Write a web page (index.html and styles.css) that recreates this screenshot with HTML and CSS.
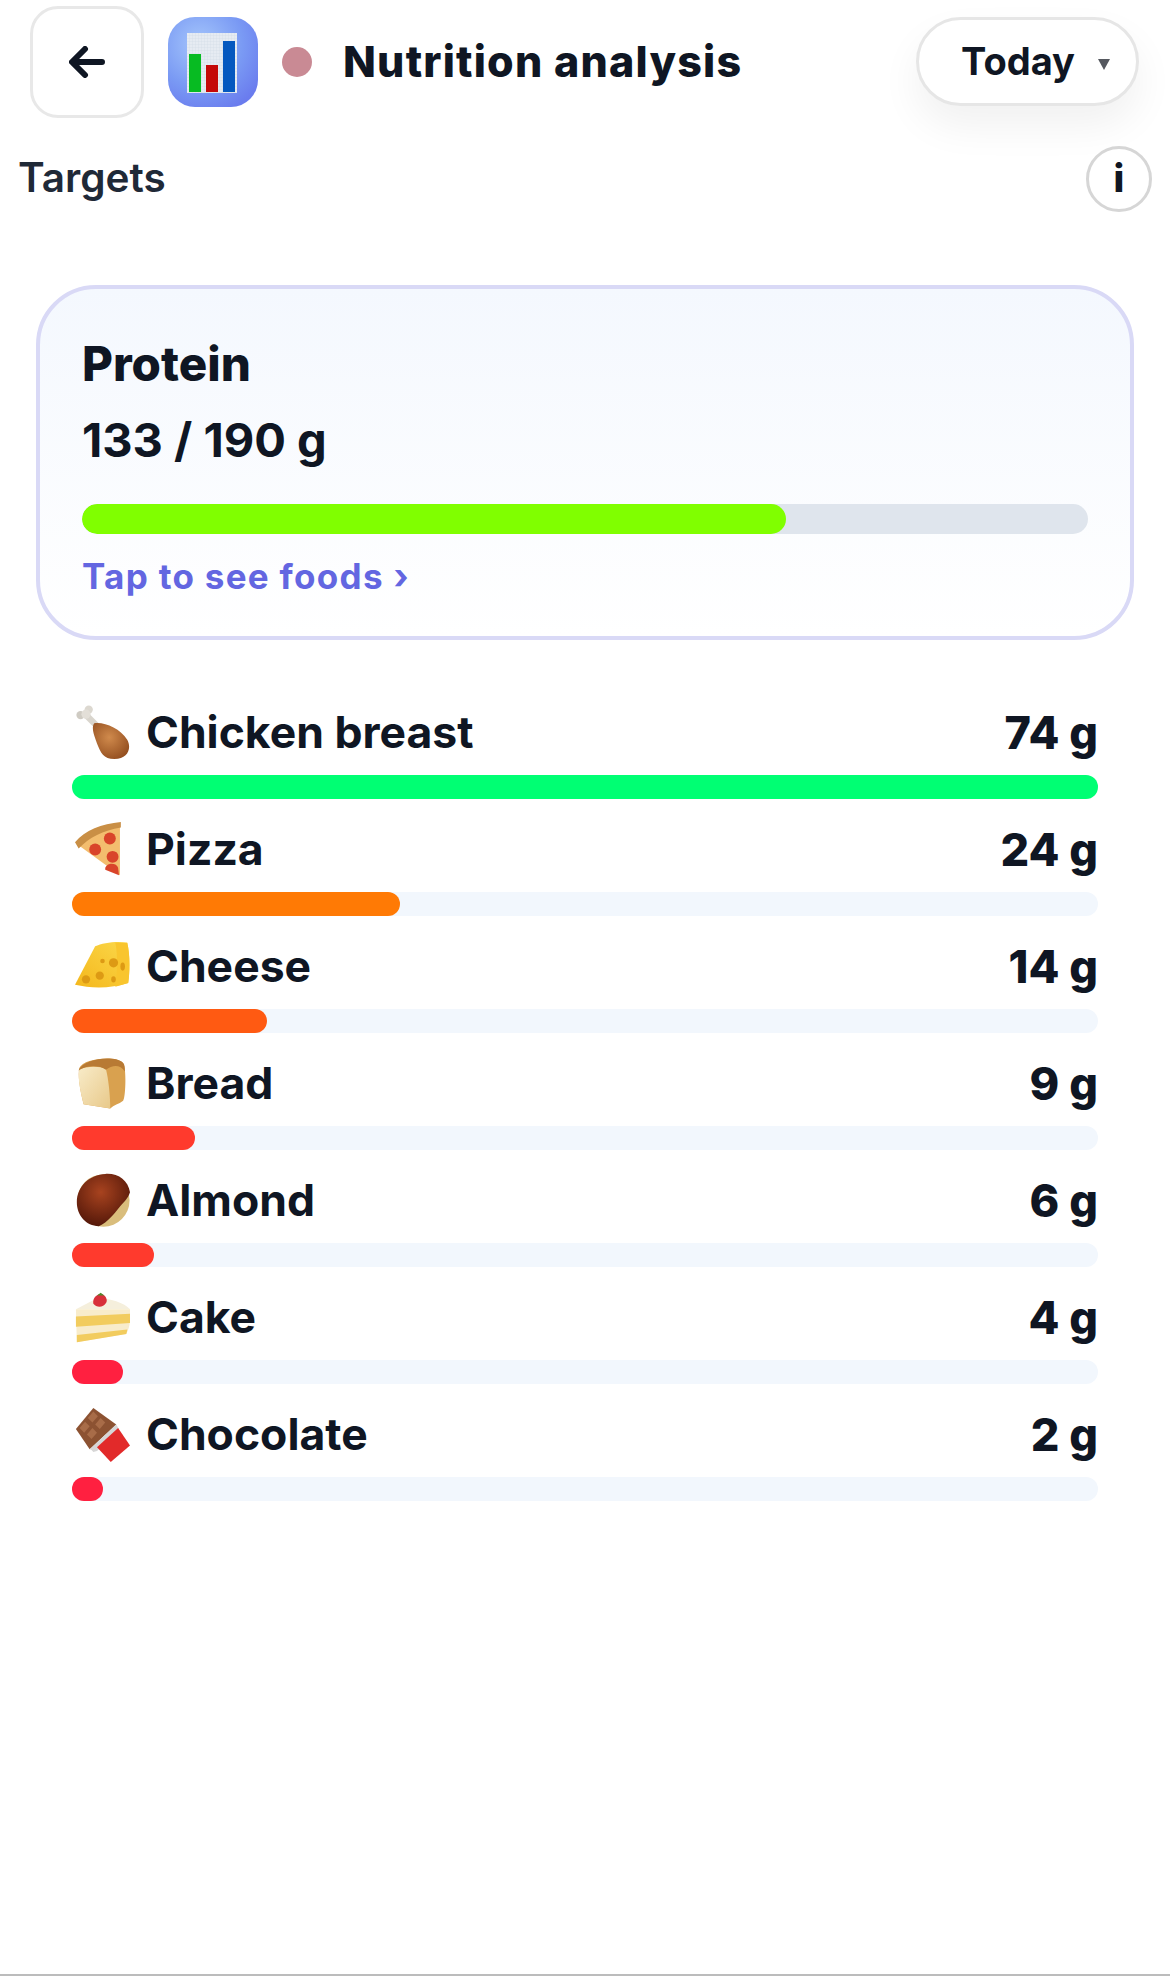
FILE: index.html
```html
<!DOCTYPE html>
<html lang="en">
<head>
    <meta charset="UTF-8">
    <meta name="viewport" content="width=device-width, initial-scale=1.0">
    <link rel="stylesheet" href="styles.css">
    <title>Nutrition analysis</title>
</head>
<body>
    <svg class="defs" width="0" height="0">
        <defs>
            <radialGradient id="app-bg" cx="0.35" cy="0.3" r="0.8">
                <stop offset="0" stop-color="#a5c6fb"/>
                <stop offset="0.6" stop-color="#7a9af4"/>
                <stop offset="1" stop-color="#6a7cee"/>
            </radialGradient>
            <pattern id="plot-grid" width="3" height="3" patternUnits="userSpaceOnUse">
                <rect width="3" height="3" fill="#e6ebf2"/>
                <path d="M0 0H3M0 0V3" stroke="#cfd8e4" stroke-width="0.6"/>
            </pattern>
            <radialGradient id="meat" cx="0.45" cy="0.4" r="0.7">
                <stop offset="0" stop-color="#d08a4c"/>
                <stop offset="1" stop-color="#8f4a1c"/>
            </radialGradient>
            <linearGradient id="cheese" x1="0" y1="1" x2="1" y2="0">
                <stop offset="0" stop-color="#f4b71c"/>
                <stop offset="1" stop-color="#fbd84a"/>
            </linearGradient>
            <linearGradient id="loaf" x1="0" y1="0" x2="1" y2="1">
                <stop offset="0" stop-color="#f8ebc8"/>
                <stop offset="1" stop-color="#e8c98a"/>
            </linearGradient>
            <radialGradient id="nut" cx="0.45" cy="0.35" r="0.7">
                <stop offset="0" stop-color="#a8431f"/>
                <stop offset="1" stop-color="#4f1508"/>
            </radialGradient>
        </defs>
    </svg>

    <div class="header">
        <button class="back-btn">
            <svg width="36" height="32" viewBox="0 0 36 32">
                <path d="M33 16H4M16 3L3 16l13 13" fill="none" stroke="#0f1623" stroke-width="6" stroke-linecap="round" stroke-linejoin="round"/>
            </svg>
        </button>
        <svg class="app-icon" width="90" height="90" viewBox="0 0 90 90">
            <rect width="90" height="90" rx="27" fill="url(#app-bg)"/>
            <rect x="19" y="16" width="50" height="60" fill="url(#plot-grid)"/>
            <rect x="21" y="37" width="12" height="38" fill="#07bb22"/>
            <rect x="38" y="48" width="12" height="27" fill="#c40808"/>
            <rect x="55" y="24" width="12" height="51" fill="#0558bf"/>
        </svg>
        <span class="status-dot"></span>
        <h1 class="title">Nutrition analysis</h1>
        <button class="range-btn">
            <span>Today</span>
            <span class="caret"></span>
        </button>
    </div>

    <div class="targets-row">
        <h2 class="targets-label">Targets</h2>
        <div class="info-btn">i</div>
    </div>

    <div class="summary-card">
        <div class="summary-name">Protein</div>
        <div class="summary-amount">133 / 190 g</div>
        <div class="summary-track">
            <div class="summary-fill" style="width: 70%"></div>
        </div>
        <div class="summary-link">Tap to see foods ›</div>
    </div>

    <div class="food-list">
        <div class="food-row">
            <div class="food-head">
                <svg class="food-icon" viewBox="0 0 60 60">
                    <path d="M12 11l12 12" stroke="#d9d5cd" stroke-width="7"/>
                    <circle cx="15" cy="5" r="4.5" fill="#dcd8d0"/>
                    <circle cx="6" cy="11" r="4.5" fill="#cfcbc3"/>
                    <circle cx="12" cy="10" r="5" fill="#e3dfd8"/>
                    <path d="M21 20c10-2 28 5 36 18 5 9 1 21-14 21-12 0-15-7-19-17-2-6-7-17-3-22z" fill="url(#meat)"/>
                </svg>
                <span class="food-name">Chicken breast</span>
                <span class="food-amount">74 g</span>
            </div>
            <div class="food-track"><div class="food-fill fill-green" style="width: 100%"></div></div>
        </div>
        <div class="food-row">
            <div class="food-head">
                <svg class="food-icon" viewBox="0 0 60 60">
                    <path d="M2 24C12 12 28 5 49 2l0 56z" fill="#f3bd6e"/>
                    <path d="M0 22C11 9 29 2 50 0l0 6C31 9 15 17 4 29z" fill="#c98f45"/>
                    <circle cx="38" cy="18" r="6.5" fill="#d9442a"/>
                    <circle cx="22" cy="30" r="6.5" fill="#d9442a"/>
                    <circle cx="41" cy="38" r="6.5" fill="#d9442a"/>
                    <path d="M33 52a6.5 5 0 0 1 14-2l1 8z" fill="#d9442a"/>
                </svg>
                <span class="food-name">Pizza</span>
                <span class="food-amount">24 g</span>
            </div>
            <div class="food-track"><div class="food-fill fill-orange" style="width: 32%"></div></div>
        </div>
        <div class="food-row">
            <div class="food-head">
                <svg class="food-icon" viewBox="0 0 60 60">
                    <path d="M0 50L22 8c8-4 24-6 35-4 3 12 3 32 1 44-18 6-40 6-58 2z" fill="url(#cheese)"/>
                    <path d="M44 4l13 0c3 12 3 32 1 44l-14 4c2-15 3-33 0-48z" fill="#f9c52e"/>
                    <circle cx="12" cy="44" r="4.5" fill="#dd9a14"/>
                    <circle cx="27" cy="40" r="4.5" fill="#dd9a14"/>
                    <circle cx="30" cy="24" r="2.5" fill="#dd9a14"/>
                    <circle cx="42" cy="26" r="5" fill="#dd9a14"/>
                    <ellipse cx="52" cy="30" rx="2.5" ry="4.5" fill="#dd9a14"/>
                    <ellipse cx="42" cy="44" rx="2.5" ry="3.5" fill="#dd9a14"/>
                </svg>
                <span class="food-name">Cheese</span>
                <span class="food-amount">14 g</span>
            </div>
            <div class="food-track"><div class="food-fill fill-deep-orange" style="width: 19%"></div></div>
        </div>
        <div class="food-row">
            <div class="food-head">
                <svg class="food-icon" viewBox="-2 -2 64 64">
                    <path d="M3 12C8 0 46-3 54 6c4 5 3 40 0 44-5 4-11 5-15 9L8 54C4 38 1 22 3 12z" fill="#d9a14f"/>
                    <path d="M3 14c6-4 24-5 31-1 3 12 5 32 5 46L8 54C4 38 1 24 3 14z" fill="url(#loaf)"/>
                    <path d="M2 15C8 0 46-3 54 6c2 2 2 6 2 10C50 7 41 9 34 14 26 8 10 9 2 15z" fill="#b87a34"/>
                </svg>
                <span class="food-name">Bread</span>
                <span class="food-amount">9 g</span>
            </div>
            <div class="food-track"><div class="food-fill fill-red" style="width: 12%"></div></div>
        </div>
        <div class="food-row">
            <div class="food-head">
                <svg class="food-icon" viewBox="0 0 60 60">
                    <circle cx="31" cy="30" r="28.5" fill="#d9bd7c"/>
                    <path d="M2 32C2 14 16 2 33 1c14-1 25 7 27 20-2 7-8 12-12 17-5 6-12 16-22 20C12 58 2 46 2 32z" fill="url(#nut)"/>
                </svg>
                <span class="food-name">Almond</span>
                <span class="food-amount">6 g</span>
            </div>
            <div class="food-track"><div class="food-fill fill-red" style="width: 8%"></div></div>
        </div>
        <div class="food-row">
            <div class="food-head">
                <svg class="food-icon" viewBox="0 -3 60 60">
                    <path d="M1 18L24 6c14 0 30 5 36 12z" fill="#f5efdc"/>
                    <path d="M1 18h59c1 9 0 20-4 27L2 54z" fill="#f8eccb"/>
                    <path d="M1 26l59-3c1 3 1 7 0 10L1 37z" fill="#f2cc5e"/>
                    <path d="M2 46l55-6c0 2-1 4-1 5L2 54z" fill="#f2cc5e"/>
                    <path d="M20 12c-1-6 3-10 8-11 5 1 8 6 6 10-3 5-10 6-14 1z" fill="#d8303a"/>
                    <path d="M24 3l4-3 4 3z" fill="#4f8a2c"/>
                </svg>
                <span class="food-name">Cake</span>
                <span class="food-amount">4 g</span>
            </div>
            <div class="food-track"><div class="food-fill fill-crimson" style="width: 5%"></div></div>
        </div>
        <div class="food-row">
            <div class="food-head">
                <svg class="food-icon" viewBox="0 0 60 60">
                    <path d="M20 1L1 24l15 22 29-27z" fill="#8c5232"/>
                    <path d="M20 5l-6 7 5 5 6-7zM11 16l-6 7 5 5 6-7zM28 12l-6 7 5 5 6-7zM19 23l-6 7 5 5 6-7z" fill="#a86c48"/>
                    <path d="M16 46l29-27 3 5-4 2 1 3-21 19-4 1-2-2z" fill="#d6d6d6"/>
                    <path d="M24 44l23-21 13 19-21 18z" fill="#e22a2a"/>
                </svg>
                <span class="food-name">Chocolate</span>
                <span class="food-amount">2 g</span>
            </div>
            <div class="food-track"><div class="food-fill fill-crimson" style="width: 3%"></div></div>
        </div>
    </div>

    <div class="bottom-line"></div>
</body>
</html>
```

FILE: styles.css
```css
* {
    box-sizing: border-box;
}

body {
    font-family: Inter, "Liberation Sans", sans-serif;
    margin: 0;
    height: 1976px;
    background-color: #fff;
    color: #0f1623;
    display: flex;
    flex-direction: column;
    overflow: hidden;
}

.defs {
    display: block;
    height: 0;
}

.header {
    display: flex;
    align-items: center;
    padding: 6px 31px 0 30px;
}

.back-btn {
    width: 114px;
    height: 112px;
    display: flex;
    align-items: center;
    justify-content: center;
    background: #fff;
    border: 3px solid #e8e8e8;
    border-radius: 28px;
    padding: 0;
}

.app-icon {
    margin-left: 24px;
    flex-shrink: 0;
}

.status-dot {
    width: 30px;
    height: 30px;
    margin-left: 24px;
    border-radius: 50%;
    background-color: #c98a94;
}

.title {
    margin: 0 0 2px 31px;
    font-size: 43px;
    font-weight: 800;
    letter-spacing: 1.2px;
    line-height: 1;
}

.range-btn {
    margin-left: auto;
    width: 223px;
    height: 89px;
    margin-top: -1px;
    display: flex;
    align-items: center;
    padding: 0 0 2px 42px;
    background: #fff;
    border: 3px solid #e6e6e6;
    border-radius: 45px;
    box-shadow: 0 20px 40px rgba(0, 0, 0, 0.06);
    font-family: inherit;
    font-size: 38px;
    font-weight: 700;
    color: #0f1623;
}

.caret {
    width: 0;
    height: 0;
    margin: 8px 0 0 23px;
    border-left: 6px solid transparent;
    border-right: 6px solid transparent;
    border-top: 11px solid #55585f;
}

.targets-row {
    display: flex;
    justify-content: space-between;
    align-items: center;
    padding: 0 18px;
    margin-top: 28px;
}

.targets-label {
    margin: -4px 0 0;
    font-size: 40.5px;
    font-weight: 600;
    color: #1f2937;
}

.info-btn {
    width: 66px;
    height: 66px;
    display: flex;
    align-items: center;
    justify-content: center;
    padding-bottom: 3px;
    border: 3px solid #d6d6d6;
    border-radius: 50%;
    background: #fff;
    font-size: 38px;
    font-weight: 800;
}

.summary-card {
    margin: 73px 36px 0;
    height: 355px;
    padding: 48px 42px 0 42px;
    border: 4px solid #d9d9f6;
    border-radius: 60px;
    background: linear-gradient(180deg, #f4f8fe, #fff);
}

.summary-name {
    font-size: 47.5px;
    font-weight: 800;
    line-height: 54px;
}

.summary-amount {
    margin-top: 22px;
    font-size: 47px;
    font-weight: 700;
    line-height: 54px;
}

.summary-track {
    margin-top: 37px;
    height: 30px;
    border-radius: 15px;
    background-color: #dfe5ed;
    overflow: hidden;
}

.summary-fill {
    height: 100%;
    border-radius: 15px;
    background-color: #80ff00;
}

.summary-link {
    margin-top: 22px;
    font-size: 35px;
    font-weight: 700;
    letter-spacing: 1.3px;
    line-height: 40px;
    color: #6366e1;
}

.food-list {
    margin-top: 61px;
    padding: 0 72px;
}

.food-row {
    height: 117px;
}

.food-head {
    height: 74px;
    padding-bottom: 12px;
    display: flex;
    align-items: center;
}

.food-icon {
    width: 55px;
    height: 55px;
    margin-left: 3px;
    flex-shrink: 0;
    filter: blur(0.4px);
}

.food-name {
    margin-left: 16px;
    font-size: 44.5px;
    font-weight: 700;
}

.food-amount {
    margin-left: auto;
    font-size: 45px;
    font-weight: 800;
}

.food-track {
    height: 24px;
    border-radius: 12px;
    background-color: #f2f7fd;
}

.food-fill {
    height: 100%;
    min-width: 30px;
    border-radius: 12px;
}

.fill-green { background-color: #00ff73; }
.fill-orange { background-color: #ff7a05; }
.fill-deep-orange { background-color: #ff5a12; }
.fill-red { background-color: #ff3a2d; }
.fill-crimson { background-color: #ff2040; }

.bottom-line {
    margin-top: auto;
    height: 2px;
    background-color: #bcbcbc;
}
```
